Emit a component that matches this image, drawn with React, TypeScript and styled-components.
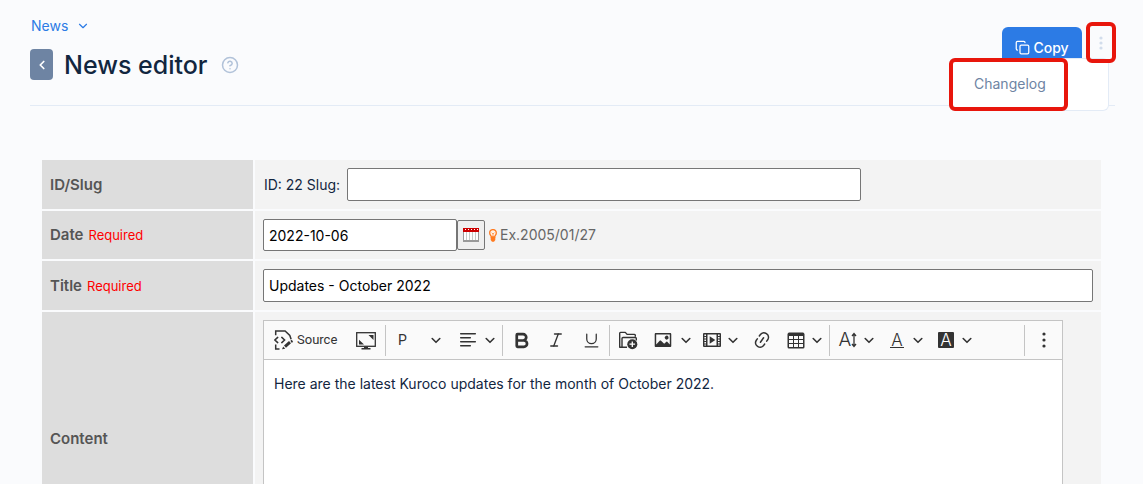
import React from 'react';
import styled, { createGlobalStyle, css } from 'styled-components';
import { Bold, Italic, Underline, CircleHelp, ChevronDown, ChevronLeft, Copy } from 'lucide-react';

const GlobalStyle = createGlobalStyle`
  *, *::before, *::after { box-sizing: border-box; }
  body {
    margin: 0;
    background: #fafbfd;
    color: #12263f;
    font-family: Inter, "Liberation Sans", sans-serif;
    font-size: 14px;
    line-height: 20px;
  }
  button, input, textarea, select { font: inherit; color: inherit; }
  svg { display: block; flex: none; }
`;

const Page = styled.main`
  padding: 16px 28px 32px 30px;
`;

const Header = styled.header`
  position: relative;
  display: flex;
  justify-content: space-between;
  align-items: flex-start;
  height: 90px;
  border-bottom: 1px solid #e3ebf6;
`;

const Breadcrumb = styled.a`
  display: inline-flex;
  align-items: center;
  gap: 8px;
  padding-left: 1px;
  color: #2c7be5;
  text-decoration: none;
`;

const TitleRow = styled.div`
  display: flex;
  align-items: center;
  gap: 11px;
  margin-top: 13px;
`;

const BackButton = styled.button`
  display: grid;
  place-items: center;
  width: 23px;
  height: 31px;
  padding: 0;
  border: 0;
  border-radius: 4px;
  background: #6e84a3;
  color: #fff;
`;

const Title = styled.h1`
  margin: 0;
  font-size: 25px;
  line-height: 30px;
  font-weight: 500;
`;

const HelpButton = styled.button`
  padding: 0;
  margin-left: 2px;
  border: 0;
  background: none;
  color: #b1c2d9;
`;

const Actions = styled.div`
  position: relative;
  display: flex;
  align-items: flex-start;
  gap: 4px;
  padding-top: 6px;
  margin-right: -1px;
`;

const CopyButton = styled.button`
  display: flex;
  align-items: center;
  justify-content: center;
  gap: 3px;
  width: 80px;
  height: 41px;
  margin-top: 5px;
  padding: 0;
  border: 0;
  border-radius: 6px;
  background: #2c7be5;
  color: #fff;
  font-weight: 500;
`;

const highlight = css`
  border: 4px solid #e8160c;
  border-radius: 6px;
`;

const MoreButton = styled.button`
  ${highlight}
  position: relative;
  z-index: 2;
  display: grid;
  place-items: center;
  width: 30px;
  height: 41px;
  padding: 0;
  background: none;
  color: #d2ddec;
`;

const Menu = styled.div`
  position: absolute;
  z-index: 1;
  top: 42px;
  right: 7px;
  width: 160px;
  border: 1px solid #e3ebf6;
  border-left: 0;
  border-radius: 6px;
  background: #fff;
`;

const MenuLink = styled.a`
  ${highlight}
  display: block;
  width: 119px;
  height: 53px;
  margin: -1px 0;
  padding: 12px 0 0 21px;
  color: #6e84a3;
  text-decoration: none;
`;

const FormTable = styled.table`
  width: calc(100% - 22px);
  margin: 52px 0 0 10px;
  border-spacing: 2px;
  table-layout: fixed;
`;

const LabelCell = styled.th`
  width: 211px;
  padding: 8px;
  background: #ddd;
  color: #555;
  font-size: 15px;
  font-weight: 600;
  text-align: left;
`;

const ValueCell = styled.td`
  padding: 8px;
  background: #f3f3f3;
`;

const Required = styled.span`
  margin-left: 5px;
  color: #f00;
  font-size: 13px;
  font-weight: 400;
`;

const Field = styled.div`
  display: flex;
  align-items: center;
`;

const SlugLabel = styled.label`
  width: 84px;
  padding-left: 1px;
`;

const TextInput = styled.input<{ $width?: string; $height?: number }>`
  width: ${(p) => p.$width || '100%'};
  height: ${(p) => p.$height || 33}px;
  padding: 0 5px;
  border: 1px solid #767676;
  border-radius: 2px;
  background: #fff;
  color: #000;
`;

const CalendarButton = styled.button`
  display: grid;
  place-items: center;
  width: 28px;
  height: 30px;
  padding: 0;
  border: 1px solid #767676;
  border-radius: 2px;
  background: #efefef;
`;

const Hint = styled.span`
  display: flex;
  align-items: center;
  gap: 3px;
  margin-left: 4px;
  color: #666;
`;

const Editor = styled.div`
  width: 800px;
  max-width: 100%;
  border: 1px solid #c4c4c4;
  background: #fff;
`;

const Toolbar = styled.div`
  display: flex;
  align-items: center;
  height: 39px;
  border-bottom: 1px solid #c4c4c4;
  background: #fafafa;
  color: #333;
`;

const Group = styled.div<{ $gap?: number; $start?: number; $end?: number }>`
  display: flex;
  align-items: center;
  gap: ${(p) => p.$gap || 0}px;
  padding-left: ${(p) => p.$start || 0}px;
  padding-right: ${(p) => p.$end || 0}px;
`;

const Separator = styled.span<{ $push?: boolean }>`
  width: 1px;
  height: 31px;
  margin-left: ${(p) => (p.$push ? 'auto' : '0')};
  background: #c4c4c4;
`;

const ToolButton = styled.button<{ $width?: number; $gap?: number }>`
  display: flex;
  align-items: center;
  justify-content: center;
  gap: ${(p) => p.$gap || 6}px;
  width: ${(p) => (p.$width ? `${p.$width}px` : 'auto')};
  height: 32px;
  padding: 0 ${(p) => (p.$width ? 0 : 4)}px;
  border: 0;
  background: none;
`;

const SourceButton = styled(ToolButton)`
  justify-content: flex-start;
  padding-left: 6px;
  font-family: Roboto, sans-serif;
  font-size: 13px;
`;

const SelectBox = styled.div`
  display: grid;
  align-items: center;
  width: 68px;

  > * { grid-area: 1 / 1; }
  > svg { justify-self: end; margin-right: 13px; pointer-events: none; }
`;

const StyleSelect = styled.select`
  width: 100%;
  height: 32px;
  padding: 0 0 0 12px;
  border: 0;
  background: none;
  appearance: none;
  font-family: Roboto, sans-serif;
  font-size: 14px;
`;

const Letter = styled.span<{ $kind: 'size' | 'color' | 'fill' }>`
  display: grid;
  grid-auto-flow: column;
  place-content: center;
  align-items: center;
  width: ${(p) => (p.$kind === 'size' ? 20 : p.$kind === 'fill' ? 16 : 14)}px;
  height: 16px;
  margin: 0 ${(p) => (p.$kind === 'size' ? 0 : p.$kind === 'fill' ? 2 : 3)}px;
  font-size: ${(p) => (p.$kind === 'size' ? 19 : 17)}px;
  font-weight: 300;
  line-height: 14px;
  ${(p) => p.$kind === 'fill' && css`background: #333; color: #fff; border-radius: 1px;`}
  ${(p) => p.$kind === 'color' && css`border-bottom: 1px solid #333;`}
`;

const EditArea = styled.textarea`
  display: block;
  width: 100%;
  height: 197px;
  padding: 14px 10px;
  border: 0;
  outline: 0;
  resize: none;
  background: #fff;
  color: #12263f;
`;

const Caret = () => (
  <svg width="10" height="10" viewBox="0 0 10 10" aria-hidden="true">
    <path d="M1.2 3.5 5 7.3l3.8-3.8" fill="none" stroke="#333" strokeWidth="1.6" strokeLinecap="round" strokeLinejoin="round" />
  </svg>
);

const Dots = ({ size, r }: { size: number; r: number }) => (
  <svg width="20" height="20" viewBox="0 0 20 20" fill="currentColor" aria-hidden="true">
    <circle cx="10" cy={10 - size} r={r} />
    <circle cx="10" cy="10" r={r} />
    <circle cx="10" cy={10 + size} r={r} />
  </svg>
);

const SourceIcon = () => (
  <svg width="20" height="20" viewBox="0 0 20 20" fill="none" stroke="#333" strokeWidth="1.5" aria-hidden="true">
    <path d="M1.700 5.200V1h9.400l4.700 4.400 1.300 3.800M1.700 14.500v4.500h3.800" />
    <path d="M3.700 7.400.9 10l2.800 2.600M7.800 7.400l2.800 2.600-2.800 2.600" strokeLinecap="round" />
    <path d="m11 16.600 5-4.400" strokeWidth="3" />
    <path d="m17 11.800 1.500-.9" strokeWidth="2.400" />
    <path d="m8 19.200 1.200-2.700 2 2.200z" fill="#333" stroke="none" />
  </svg>
);

const MaximizeIcon = () => (
  <svg width="20" height="20" viewBox="0 0 20 20" fill="#333" aria-hidden="true">
    <rect x=".7" y="2.700" width="18.600" height="13.600" fill="none" stroke="#333" strokeWidth="1.300" />
    <path d="M12.500 5h5v5zM3 9.700 8 14.500H3zM8 17h4v1h2.500v1.400h-9V18H8z" />
  </svg>
);

const AlignIcon = () => (
  <svg width="20" height="20" viewBox="0 0 20 20" stroke="#333" strokeWidth="1.5" strokeLinecap="round" aria-hidden="true">
    <path d="M2.700 3.700h14.600M2.700 7.700h9.600M2.700 11.700h14.600M2.700 15.700h9.600" />
  </svg>
);

const FolderIcon = () => (
  <svg width="20" height="20" viewBox="0 0 20 20" fill="none" stroke="#333" strokeWidth="1.4" strokeLinejoin="round" aria-hidden="true">
    <path d="M9 17.300H1.700V3.200q0-.8.8-.8h4.800l1.800 2h7.400q.8 0 .8.8v1.500" />
    <path d="M4 17.300V8.500q0-1 1-1h12.300q1 0 1 1v2" />
    <circle cx="14.300" cy="14.200" r="5" fill="#333" stroke="none" />
    <path d="M14.300 11.400V17M11.500 14.200h5.600" stroke="#fff" strokeWidth="1.300" />
  </svg>
);

const ImageIcon = () => (
  <svg width="20" height="20" viewBox="0 0 20 20" fill="#333" aria-hidden="true">
    <path d="M6.910 10.540c.26-.23.64-.21.88.03l3.360 3.140 2.230-2.060a.64.64 0 0 1 .87 0l2.520 2.970V4.500H3.200v10.120l3.710-4.080zm10.270-7.510c.6 0 1.090.47 1.090 1.050v11.840c0 .59-.49 1.060-1.090 1.060H2.790c-.6 0-1.090-.47-1.090-1.060V4.080c0-.58.49-1.050 1.100-1.050h14.380zm-5.220 5.560a1.960 1.960 0 1 1 3.400-1.960 1.960 1.960 0 0 1-3.400 1.960z" />
  </svg>
);

const MediaIcon = () => (
  <svg width="20" height="20" viewBox="0 0 20 20" fill="#333" aria-hidden="true">
    <rect x="1" y="3" width="18" height="14" rx="1" />
    <path d="M5.500 4.500h9v11h-9z" fill="#fafafa" />
    <path d="M3.200 4.500v11M16.800 4.500v11" stroke="#fafafa" strokeWidth="1.600" strokeDasharray="1.400 1.100" />
    <path d="m7.700 6.300 5.600 3.700-5.600 3.700z" />
  </svg>
);

const LinkIcon = () => (
  <svg width="20" height="20" viewBox="0 0 20 20" fill="#333" aria-hidden="true">
    <path d="m11.077 15 .991-1.416a.75.75 0 1 1 1.229.86l-1.148 1.640a.748.748 0 0 1-.217.206 5.251 5.251 0 0 1-8.503-5.955.741.741 0 0 1 .12-.274l1.147-1.639a.75.75 0 1 1 1.228.86L4.933 10.700l.006.003a3.750 3.750 0 0 0 6.132 4.294l.006.004zm5.494-5.335a.748.748 0 0 1-.12.274l-1.147 1.639a.75.75 0 1 1-1.228-.86l.86-1.230a3.750 3.750 0 0 0-6.144-4.301l-.86 1.229a.75.75 0 0 1-1.229-.86l1.148-1.640a.748.748 0 0 1 .217-.206 5.251 5.251 0 0 1 8.503 5.955zm-4.563-2.532a.75.75 0 0 1 .184 1.045l-3.155 4.505a.75.75 0 1 1-1.229-.86l3.155-4.506a.75.75 0 0 1 1.045-.184z" />
  </svg>
);

const TableIcon = () => (
  <svg width="20" height="20" viewBox="0 0 20 20" fill="#333" aria-hidden="true">
    <path d="M3 6v3h4V6H3zm0 4v3h4v-3H3zm0 4v3h4v-3H3zm5 3h4v-3H8v3zm5 0h4v-3h-4v3zm4-4v-3h-4v3h4zm0-4V6h-4v3h4zm1.500 8a1.500 1.500 0 0 1-1.500 1.500H3A1.500 1.500 0 0 1 1.500 17V4c.222-.863 1.068-1.500 2-1.500h13c.932 0 1.778.637 2 1.500v13zM12 13v-3H8v3h4zm0-4V6H8v3h4z" />
  </svg>
);

const HeightArrow = () => (
  <svg width="6" height="16" viewBox="0 0 6 16" fill="none" stroke="#333" strokeWidth="1.300" aria-hidden="true">
    <path d="M3 2v12M1 4l2-2.500L5 4M1 12l2 2.500L5 12" />
  </svg>
);

const CalendarIcon = () => (
  <svg width="16" height="14" viewBox="0 0 16 14" aria-hidden="true">
    <rect width="16" height="14" fill="#999" />
    <path d="M1 4h14v8H1z" fill="#fff" />
    <path d="M3.500 4v8M6.500 4v8M9.500 4v8M12.500 4v8" stroke="#c4ccc8" />
    <path d="M0 0h16v4H0z" fill="#c00" />
    <path d="M2 1.500h13" stroke="#fff" strokeDasharray="1 2" />
  </svg>
);

const BulbIcon = () => (
  <svg width="8" height="13" viewBox="0 0 8 13" aria-hidden="true">
    <path d="M2.300 8C2.300 6.600.7 6 .7 3.900a3.300 3.300 0 0 1 6.600 0C7.300 6 5.700 6.600 5.700 8z" fill="#fff3e8" stroke="#ff7a1f" strokeWidth="1.300" />
    <path d="M2.700 3.700 4 5l1.300-1.300M4 5v3" fill="none" stroke="#ff7a1f" strokeWidth=".7" />
    <path d="M1.700 8h4.600v3L5 12.700H3L1.700 11z" fill="#ff7a1f" />
  </svg>
);

export default function App() {
  return (
    <Page>
      <GlobalStyle />
      <Header>
        <div>
          <Breadcrumb href="#news">
            News <ChevronDown size={14} />
          </Breadcrumb>
          <TitleRow>
            <BackButton type="button" aria-label="Back">
              <ChevronLeft size={14} strokeWidth={3} />
            </BackButton>
            <Title>News editor</Title>
            <HelpButton type="button" aria-label="Help">
              <CircleHelp size={18} strokeWidth={2} />
            </HelpButton>
          </TitleRow>
        </div>
        <Actions>
          <CopyButton type="button">
            <Copy size={15} strokeWidth={2} />
            Copy
          </CopyButton>
          <MoreButton type="button" aria-label="More actions" aria-expanded="true">
            <Dots size={5} r={1.6} />
          </MoreButton>
          <Menu>
            <MenuLink href="#changelog">Changelog</MenuLink>
          </Menu>
        </Actions>
      </Header>

      <FormTable>
        <tbody>
          <tr>
            <LabelCell scope="row">ID/Slug</LabelCell>
            <ValueCell>
              <Field>
                <SlugLabel htmlFor="slug">ID: 22 Slug:</SlugLabel>
                <TextInput id="slug" $width="514px" />
              </Field>
            </ValueCell>
          </tr>
          <tr>
            <LabelCell scope="row">
              <label htmlFor="date">Date</label>
              <Required>Required</Required>
            </LabelCell>
            <ValueCell>
              <Field>
                <TextInput id="date" $width="194px" $height={32} defaultValue="2022-10-06" />
                <CalendarButton type="button" aria-label="Choose date">
                  <CalendarIcon />
                </CalendarButton>
                <Hint>
                  <BulbIcon />
                  Ex.2005/01/27
                </Hint>
              </Field>
            </ValueCell>
          </tr>
          <tr>
            <LabelCell scope="row">
              <label htmlFor="title">Title</label>
              <Required>Required</Required>
            </LabelCell>
            <ValueCell>
              <Field>
                <TextInput id="title" defaultValue="Updates - October 2022" />
              </Field>
            </ValueCell>
          </tr>
          <tr>
            <LabelCell scope="row">
              <label htmlFor="content">Content</label>
            </LabelCell>
            <ValueCell>
              <Editor>
                <Toolbar role="toolbar" aria-label="Editor toolbar">
                  <Group $start={4} $end={1}>
                    <SourceButton type="button" $width={80} $gap={3}>
                      <SourceIcon />
                      Source
                    </SourceButton>
                    <ToolButton type="button" $width={36} aria-label="Maximize"><MaximizeIcon /></ToolButton>
                  </Group>
                  <Separator />
                  <Group $end={3}>
                    <SelectBox>
                      <StyleSelect aria-label="Heading" defaultValue="p">
                        <option value="p">P</option>
                        <option value="h1">H1</option>
                      </StyleSelect>
                      <Caret />
                    </SelectBox>
                    <ToolButton type="button" $gap={7} aria-label="Text alignment"><AlignIcon /><Caret /></ToolButton>
                  </Group>
                  <Separator />
                  <Group $start={1} $end={1} $gap={1}>
                    <ToolButton type="button" $width={34} aria-label="Bold"><Bold size={19} strokeWidth={3.4} /></ToolButton>
                    <ToolButton type="button" $width={34} aria-label="Italic"><Italic size={18} strokeWidth={1.8} /></ToolButton>
                    <ToolButton type="button" $width={34} aria-label="Underline"><Underline size={19} strokeWidth={1.6} /></ToolButton>
                  </Group>
                  <Separator />
                  <Group $gap={3} $end={3}>
                    <ToolButton type="button" $width={36} aria-label="File manager"><FolderIcon /></ToolButton>
                    <ToolButton type="button" $gap={8} aria-label="Insert image"><ImageIcon /><Caret /></ToolButton>
                    <ToolButton type="button" aria-label="Insert media"><MediaIcon /><Caret /></ToolButton>
                    <ToolButton type="button" $width={34} aria-label="Link"><LinkIcon /></ToolButton>
                    <ToolButton type="button" aria-label="Insert table"><TableIcon /><Caret /></ToolButton>
                  </Group>
                  <Separator />
                  <Group $start={4} $gap={5}>
                    <ToolButton type="button" aria-label="Font size">
                      <Letter $kind="size">A<HeightArrow /></Letter><Caret />
                    </ToolButton>
                    <ToolButton type="button" aria-label="Font color">
                      <Letter $kind="color">A</Letter><Caret />
                    </ToolButton>
                    <ToolButton type="button" aria-label="Font background color">
                      <Letter $kind="fill">A</Letter><Caret />
                    </ToolButton>
                  </Group>
                  <Separator $push />
                  <ToolButton type="button" $width={37} aria-label="Show more items"><Dots size={6} r={1.6} /></ToolButton>
                </Toolbar>
                <EditArea id="content" defaultValue="Here are the latest Kuroco updates for the month of October 2022." />
              </Editor>
            </ValueCell>
          </tr>
        </tbody>
      </FormTable>
    </Page>
  );
}
